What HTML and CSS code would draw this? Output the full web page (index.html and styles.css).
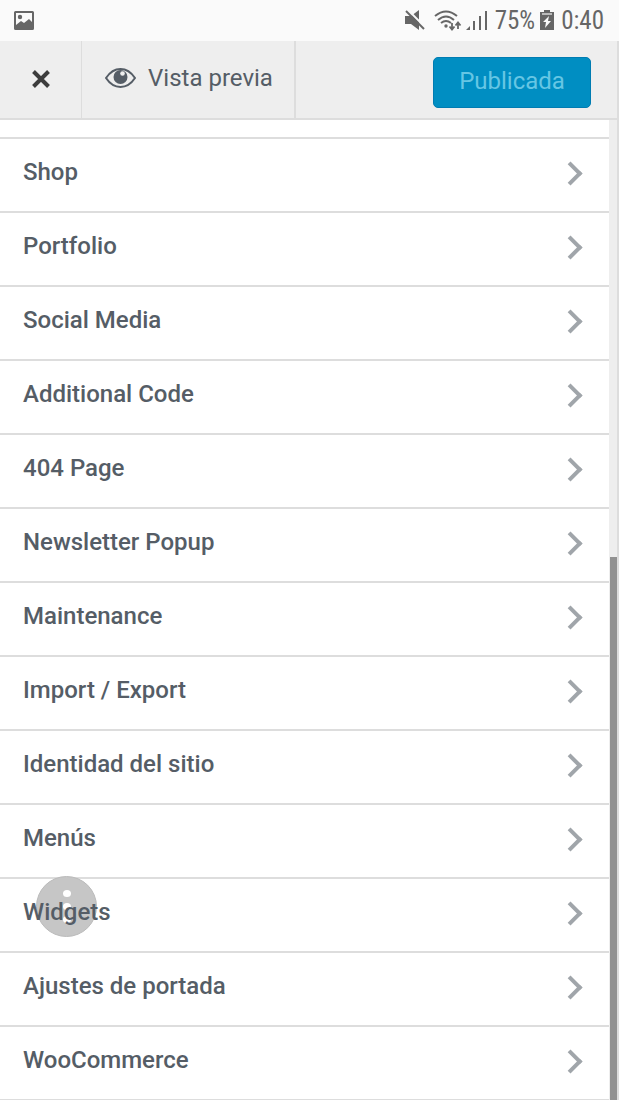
FILE: index.html
```
<!DOCTYPE html>
<html lang="es">
  <head>
    <meta charset="utf-8">
    <meta name="viewport" content="width=device-width, initial-scale=1">
    <title>Personalizar</title>
    <link rel="stylesheet" href="styles.css">
  </head>
  <body>
    <div class="status-bar">
      <svg class="status-image" width="20" height="19" viewBox="0 0 20 19">
        <path fill="#666" fill-rule="evenodd" d="M1.500 0h17A1.500 1.500 0 0 1 20 1.500v16a1.500 1.500 0 0 1-1.500 1.500h-17A1.500 1.500 0 0 1 0 17.500v-16A1.500 1.500 0 0 1 1.500 0zM2 2v12l5-4 3 2 5-4 3 3V2z"/>
        <circle cx="6" cy="6" r="2.200" fill="#666"/>
      </svg>
      <div class="status-right">
        <svg width="20" height="21" viewBox="0 0 20 21">
          <path fill="#666" d="M0 6h6l8-6v20l-8-6H0z"/>
          <path stroke="#fafafa" stroke-width="2" d="M3 0l18 18"/>
          <path stroke="#666" stroke-width="2" d="M1 1l18 18"/>
        </svg>
        <svg class="status-wifi" width="28" height="21" viewBox="0 0 28 21">
          <g fill="none" stroke="#666" stroke-width="2">
            <path d="M1 6q11-9 22 0M4 10q8-7 16 0M7 13q5-4 10 0"/>
            <path d="M18 13v6M15.500 16.500l2.500 3 2.500-3M24 19v-6M21.500 15.500l2.500-3 2.500 3" stroke-width="1.800"/>
          </g>
          <circle cx="12" cy="16" r="1.700" fill="#666"/>
        </svg>
        <svg class="status-signal" width="21" height="21" viewBox="0 0 21 21">
          <path fill="#666" d="M0 20l4-4v4zM7 11h2v9H7zM13 6h2v14h-2zM19 1h2v19h-2z"/>
        </svg>
        <span class="status-text">75%</span>
        <svg class="status-battery" width="14" height="21" viewBox="0 0 14 21">
          <path fill="#666" d="M4 0h6v2h4v18H0V2h4z"/>
          <path stroke="#bbb" stroke-width="2" d="M2 4h10"/>
          <path fill="#fafafa" d="M9 6l-6 6h3l-1 6 6-7H8z"/>
        </svg>
        <span class="status-text">0:40</span>
      </div>
    </div>

    <header class="header">
      <button class="close" type="button" aria-label="Cerrar">
        <svg width="20" height="20" viewBox="0 0 20 20">
          <path stroke="#3c3c3c" stroke-width="4" d="M2.500 2.500l15 15M17.500 2.500l-15 15"/>
        </svg>
      </button>
      <button class="preview" type="button">
        <svg width="31" height="20" viewBox="0 0 31 20">
          <path fill="none" stroke="#555d66" stroke-width="2" d="M1 10Q7 1 15.500 1T30 10Q24 19 15.500 19T1 10z"/>
          <circle cx="15.500" cy="9" r="7" fill="#555d66"/>
          <circle cx="17.500" cy="5.500" r="2.300" fill="#eee"/>
        </svg>
        <span>Vista previa</span>
      </button>
      <button class="publish" type="button" disabled>Publicada</button>
    </header>

    <main class="main">
      <nav class="panel-list">
        <a class="panel" href="#shop">Shop</a>
        <a class="panel" href="#portfolio">Portfolio</a>
        <a class="panel" href="#social">Social Media</a>
        <a class="panel" href="#code">Additional Code</a>
        <a class="panel" href="#404">404 Page</a>
        <a class="panel" href="#newsletter">Newsletter Popup</a>
        <a class="panel" href="#maintenance">Maintenance</a>
        <a class="panel" href="#import">Import / Export</a>
        <a class="panel" href="#identidad">Identidad del sitio</a>
        <a class="panel" href="#menus">Menús</a>
        <a class="panel panel-widgets" href="#widgets">
          <span class="panel-label">Widgets</span>
          <span class="touch-menu"><i></i><i></i><i></i></span>
        </a>
        <a class="panel" href="#portada">Ajustes de portada</a>
        <a class="panel" href="#woocommerce">WooCommerce</a>
      </nav>
      <div class="scrollbar"><div class="thumb"></div></div>
    </main>
  </body>
</html>
```
FILE: styles.css
```
* {
  box-sizing: border-box;
}

body {
  margin: 0;
  min-height: 100vh;
  display: flex;
  flex-direction: column;
  font-family: Roboto, sans-serif;
  font-size: 24px;
  color: #555d66;
  background: #fff;
}

svg {
  display: block;
  flex: none;
}

button {
  margin: 0;
  padding: 0;
  border: none;
  background: none;
  font: inherit;
  color: inherit;
}

/* phone status bar */
.status-bar {
  height: 41px;
  padding: 0 15px 0 14px;
  display: flex;
  align-items: center;
  justify-content: space-between;
  background: #fafafa;
}

.status-right {
  display: flex;
  align-items: center;
  color: #666;
}

.status-wifi {
  margin-left: 9px;
}

.status-signal {
  margin: 0 8px 0 4px;
}

.status-battery {
  margin: 0 7px 0 5px;
}

.status-text {
  font-family: "Roboto Condensed", Roboto, sans-serif;
  font-size: 25px;
}

/* top actions */
.header {
  height: 79px;
  display: flex;
  background: #eee;
  border-bottom: 2px solid #ddd;
  border-right: 2px solid #ddd;
}

.close {
  width: 82px;
  padding-bottom: 2px;
  display: flex;
  align-items: center;
  justify-content: center;
  border-right: 1px solid #ddd;
}

.preview {
  width: 214px;
  padding: 0 0 4px 2px;
  display: flex;
  align-items: center;
  justify-content: center;
  gap: 12px;
  border-right: 2px solid #ddd;
}

.publish {
  width: 158px;
  height: 51px;
  margin: 16px 26px 0 auto;
  padding-bottom: 3px;
  border: 1px solid #007cb2;
  border-radius: 5px;
  background: #008ec2;
  color: #66c6e4;
}

/* sections */
.main {
  flex: 1;
  display: flex;
}

.panel-list {
  flex: 1;
  padding-top: 17px;
  border-bottom: 1px solid #ddd;
}

.panel {
  position: relative;
  height: 74px;
  padding: 0 30px 6px 23px;
  display: flex;
  align-items: center;
  justify-content: space-between;
  border-top: 2px solid #ddd;
  font-weight: 500;
  color: #555d66;
  text-decoration: none;
}

.panel::after {
  content: "";
  width: 13px;
  height: 13px;
  margin-top: 3px;
  border: solid #a0a5aa;
  border-width: 4px 4px 0 0;
  transform: rotate(45deg);
}

.panel-label {
  position: relative;
  z-index: 1;
}

/* floating touch shortcut */
.touch-menu {
  position: absolute;
  left: 36px;
  top: -3px;
  width: 61px;
  height: 61px;
  padding: 13px 0;
  display: flex;
  flex-direction: column;
  align-items: center;
  gap: 6px;
  border: 1px solid #bbb;
  border-radius: 50%;
  background: #c6c6c6;
}

.touch-menu i {
  width: 8px;
  height: 8px;
  border-radius: 50%;
  background: #fff;
}

.scrollbar {
  width: 10px;
  display: flex;
  flex-direction: column;
  justify-content: flex-end;
  background: #eee;
  border-right: 2px solid #ddd;
}

.thumb {
  height: 55.4%;
  margin: 0 0 0 1px;
  background: #929292;
}
```
